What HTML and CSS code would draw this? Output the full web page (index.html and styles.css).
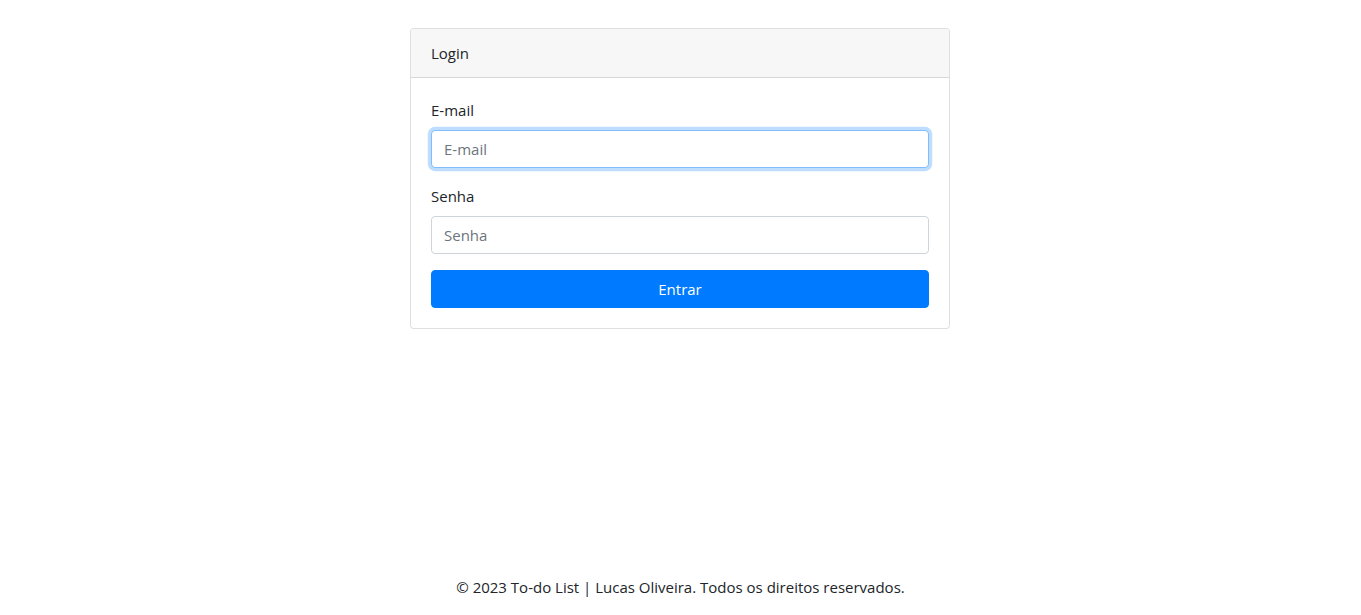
FILE: index.html
```html
<!DOCTYPE html>
<html lang="pt-BR">
<head>
<meta charset="utf-8">
<title>Login - To-do List</title>
<link rel="stylesheet" href="styles.css">
</head>
<body>
<main class="main">
  <div class="card">
    <div class="card-header">Login</div>
    <form class="card-body">
      <div class="form-group">
        <label class="label" for="email">E-mail</label>
        <input class="input input-focus" id="email" type="email" placeholder="E-mail" autofocus>
      </div>
      <div class="form-group">
        <label class="label" for="senha">Senha</label>
        <input class="input" id="senha" type="password" placeholder="Senha">
      </div>
      <button class="btn" type="button">Entrar</button>
    </form>
  </div>
</main>
<footer class="footer">© 2023 To-do List | Lucas Oliveira. Todos os direitos reservados.</footer>
</body>
</html>
```
FILE: styles.css
```css
* { box-sizing: border-box; }
html, body { height: 100%; }
body {
  margin: 0;
  font-family: "Open Sans", "Noto Sans", sans-serif;
  font-size: 15px;
  line-height: 24px;
  color: #212529;
  background: #fff;
  display: flex;
  flex-direction: column;
  min-height: 100vh;
}
.main {
  flex: 1;
  display: flex;
  justify-content: center;
  align-items: flex-start;
  padding-top: 28px;
  padding-right: 1px;
}
.card {
  width: 540px;
  border: 1px solid rgba(0,0,0,.125);
  border-radius: 4px;
  background: #fff;
}
.card-header {
  padding: 12px 20px;
  background: #f7f7f7;
  border-bottom: 1px solid rgba(0,0,0,.125);
  border-radius: 3px 3px 0 0;
}
.card-body {
  padding: 20px;
  margin: 0;
  display: flex;
  flex-direction: column;
}
.form-group {
  display: flex;
  flex-direction: column;
  margin-bottom: 16px;
}
.label {
  margin-bottom: 8px;
}
.input {
  height: 38px;
  padding: 6px 12px;
  font: inherit;
  color: #495057;
  border: 1px solid #ced4da;
  border-radius: 4px;
  outline: none;
  background: #fff;
}
.input::placeholder { color: #6c757d; opacity: 1; }
.input-focus, .input:focus {
  border-color: #80bdff;
  box-shadow: 0 0 0 3.2px rgba(0,123,255,.25);
}
.btn {
  height: 38px;
  font: inherit;
  color: #fff;
  background: #007bff;
  border: 1px solid #007bff;
  border-radius: 4px;
  padding: 6px 12px;
  cursor: pointer;
}
.footer {
  text-align: center;
  padding-bottom: 16px;
}
```
